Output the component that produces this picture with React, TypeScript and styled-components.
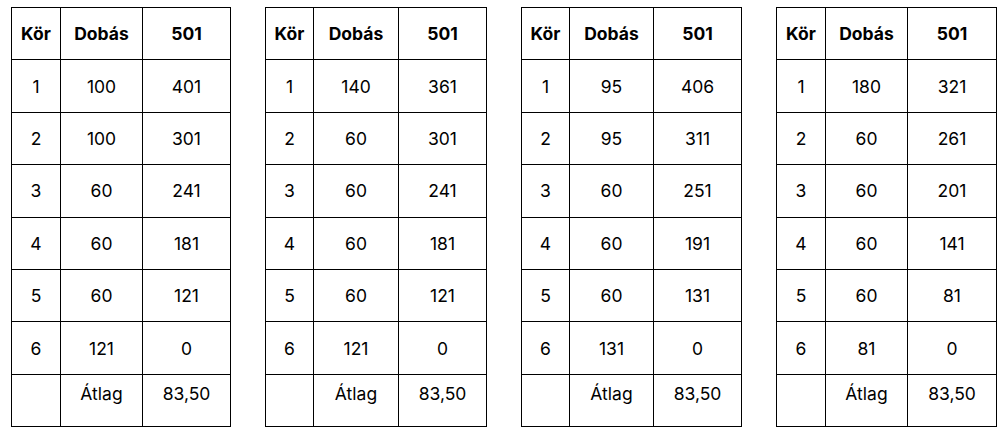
import React from "react";
import styled, { createGlobalStyle } from "styled-components";

type Game = {
  cols: [number, number, number];
  throws: number[];
  avg: string;
};

const games: Game[] = [
  { cols: [49, 82, 88], throws: [100, 100, 60, 60, 60, 121], avg: "83,50" },
  { cols: [48, 85, 88], throws: [140, 60, 60, 60, 60, 121], avg: "83,50" },
  { cols: [48, 84, 88], throws: [95, 95, 60, 60, 60, 131], avg: "83,50" },
  { cols: [49, 82, 89], throws: [180, 60, 60, 60, 60, 81], avg: "83,50" },
];

const GlobalStyle = createGlobalStyle`
  body {
    margin: 0;
    background: #fff;
    font-family: Inter, "Liberation Sans", sans-serif;
    color: #000;
  }
`;

const Page = styled.div`
  display: flex;
  align-items: flex-start;
  gap: 34px;
  padding: 7px 0 0 11px;
`;

const Table = styled.table<{ $width: number }>`
  width: ${(p) => p.$width}px;
  border-collapse: collapse;
  table-layout: fixed;
  font-size: 17.5px;

  td {
    border: 1px solid #000;
    text-align: center;
    vertical-align: middle;
    padding: 0;
  }
`;

const Row = styled.tr`
  height: 52.4px;
`;

const HeadRow = styled(Row)`
  font-weight: 700;
`;

const FootRow = styled(Row)`
  td {
    vertical-align: top;
    padding-top: 8px;
  }
`;

const ScoreTable: React.FC<{ game: Game }> = ({ game }) => {
  let left = 501;
  const width = game.cols.reduce((a, b) => a + b, 0);
  return (
    <Table $width={width}>
      <colgroup>
        {game.cols.map((w, i) => (
          <col key={i} style={{ width: w }} />
        ))}
      </colgroup>
      <tbody>
        <HeadRow>
          <td>Kör</td>
          <td>Dobás</td>
          <td>501</td>
        </HeadRow>
        {game.throws.map((t, i) => {
          left -= t;
          return (
            <Row key={i}>
              <td>{i + 1}</td>
              <td>{t}</td>
              <td>{left}</td>
            </Row>
          );
        })}
        <FootRow>
          <td></td>
          <td>Átlag</td>
          <td>{game.avg}</td>
        </FootRow>
      </tbody>
    </Table>
  );
};

const App: React.FC = () => {
  return (
    <>
      <GlobalStyle />
      <Page>
        {games.map((g, i) => (
          <ScoreTable key={i} game={g} />
        ))}
      </Page>
    </>
  );
};

export default App;
